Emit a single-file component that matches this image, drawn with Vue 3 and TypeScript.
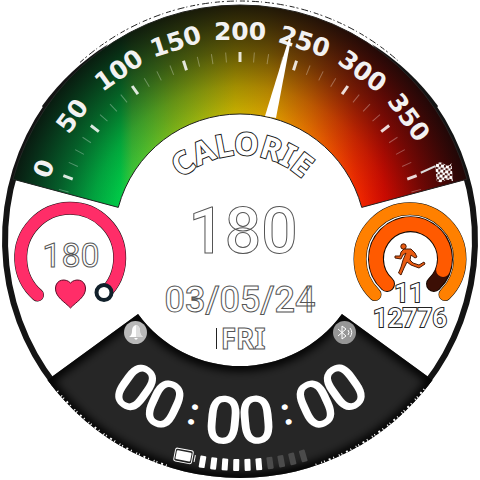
<script setup lang="ts">
interface Dial { value: string; angle: number }
interface Tick { angle: number; major: boolean }

const dialLabels: Dial[] = [
  { value: '0', angle: -70 },
  { value: '50', angle: -53.5 },
  { value: '100', angle: -35.5 },
  { value: '150', angle: -18 },
  { value: '200', angle: 0 },
  { value: '250', angle: 18 },
  { value: '300', angle: 36 },
  { value: '350', angle: 54 }
]

const ticks: Tick[] = Array.from({ length: 35 }, (_, i) => ({
  angle: -70 + (i - 1) * 4.375,
  major: (i - 1) % 4 === 0
}))

const batteryBars = Array.from({ length: 10 }, (_, i) => ({
  angle: 9.6 - i * 2.88,
  on: i < 6
}))

const heartRate = 180
const calories = 180
const steps = 12776
const floors = 11
const date = '03/05/24'
const weekday = 'FRI'
const clockPairs = [
  { text: '00', offset: '25%' },
  { text: '00', offset: '50%' },
  { text: '00', offset: '75%' }
]
const colonOffsets = ['37.5%', '62.5%']

function point(r: number, deg: number): string {
  const a = (deg * Math.PI) / 180
  return `${(240 + r * Math.sin(a)).toFixed(2)} ${(240 - r * Math.cos(a)).toFixed(2)}`
}

function sector(inner: number, outer: number, from: number, to: number): string {
  const large = to - from > 180 ? 1 : 0
  return `M${point(outer, from)}A${outer} ${outer} 0 ${large} 1 ${point(outer, to)}L${point(inner, to)}A${inner} ${inner} 0 ${large} 0 ${point(inner, from)}Z`
}

function arc(r: number, from: number, to: number): string {
  return `M${point(r, from)}A${r} ${r} 0 0 1 ${point(r, to)}`
}

// Baselines running left to right under the centre, 60 degrees to each side
function baseline(r: number): string {
  return `M${point(r, 240)}A${r} ${r} 0 0 0 ${point(r, 120)}`
}

const gaugePath = sector(126, 235, -75, 75)
const clockPanel = sector(126, 238, 126, 234)

// Bezel ends that narrow to a point against the gauge
const taperLeft = `M${point(239, -56)}A239 239 0 0 1 ${point(236, -34)}L${point(233, -56)}Z`
const taperRight = `M${point(239, 56)}A239 239 0 0 0 ${point(236, 34)}L${point(233, 56)}Z`
</script>

<template>
  <main class="face">
    <svg class="watch" viewBox="0 0 480 480" role="img" aria-label="Watch face">
      <defs>
        <linearGradient id="hue" gradientUnits="userSpaceOnUse" x1="0" y1="0" x2="480" y2="0">
          <stop offset="0" stop-color="#00b058" />
          <stop offset=".25" stop-color="#00cc48" />
          <stop offset=".275" stop-color="#3cc437" />
          <stop offset=".36" stop-color="#7ab41a" />
          <stop offset=".49" stop-color="#c8b000" />
          <stop offset=".56" stop-color="#d8a000" />
          <stop offset=".65" stop-color="#e66c00" />
          <stop offset=".74" stop-color="#f02c00" />
          <stop offset=".8" stop-color="#f40c00" />
          <stop offset="1" stop-color="#d00000" />
        </linearGradient>
        <radialGradient id="shade" gradientUnits="userSpaceOnUse" cx="240" cy="240" r="236">
          <stop offset=".53" stop-color="#0a0808" stop-opacity="0" />
          <stop offset=".65" stop-color="#0a0808" stop-opacity=".2" />
          <stop offset=".8" stop-color="#0a0808" stop-opacity=".54" />
          <stop offset=".92" stop-color="#0a0808" stop-opacity=".76" />
          <stop offset="1" stop-color="#0a0808" stop-opacity=".9" />
        </radialGradient>
        <pattern id="checker" width="5" height="5" patternUnits="userSpaceOnUse">
          <rect width="5" height="5" fill="#4a1512" />
          <rect width="3" height="3" fill="#fff" />
          <rect x="2.5" y="2.5" width="2.5" height="2.5" fill="#fff" />
        </pattern>
        <filter id="soft"><feGaussianBlur stdDeviation="4" /></filter>
        <clipPath id="panelClip"><path :d="clockPanel" /></clipPath>
        <path id="titleArc" d="M154 243A88 88 0 0 1 330 243" />
        <path id="clockArc" :d="baseline(204)" />
        <path id="colonArc" :d="baseline(191)" />
      </defs>

      <!-- bezel -->
      <path class="bezel" :d="arc(235, 232, 305)" />
      <path class="bezel" :d="arc(235, 55, 128)" />
      <path :d="taperLeft" fill="#141414" />
      <path :d="taperRight" fill="#141414" />
      <path class="speckle" :d="arc(239, 318, 360)" />
      <path class="speckle" :d="arc(239, 0, 42)" />

      <!-- calorie gauge -->
      <path :d="gaugePath" fill="url(#hue)" />
      <path :d="gaugePath" fill="url(#shade)" class="gauge-edge" />
      <g v-for="t in ticks" :key="t.angle" :transform="`rotate(${t.angle} 240 240)`">
        <line x1="240" x2="240" y1="52" y2="62" :class="t.major ? 'tick major' : 'tick'" />
      </g>
      <text
        v-for="l in dialLabels"
        :key="l.value"
        class="dial"
        x="240"
        y="40"
        :transform="`rotate(${l.angle} 240 240)`"
      >{{ l.value }}</text>
      <g transform="rotate(8 444 173)">
        <path d="M421 176L435 167" stroke="#ddd" stroke-width="2" />
        <path d="M434 166Q438 161 443 164T450 162L454 180Q448 178 445 181T438 182Z" fill="url(#checker)" />
      </g>
      <path d="M289 38L291 39L276 118L265 116Z" fill="#fff" />

      <text class="title"><textPath href="#titleArc" startOffset="50%">CALORIE</textPath></text>
      <text class="calories outlined" x="243" y="253">{{ calories }}</text>
      <text class="date outlined" x="240" y="312">{{ date }}</text>
      <text class="weekday outlined" x="243" y="349">{{ weekday }}</text>
      <path d="M216.500 328V349" stroke="#222" />

      <!-- heart rate -->
      <path class="halo" d="M37.500 295A49.500 49.500 0 1 1 104 294" />
      <path class="ring pulse" d="M37.500 295A49.500 49.500 0 1 1 104 294" />
      <circle cx="104" cy="292.500" r="7.500" fill="#fff" stroke="#12212b" stroke-width="4" />
      <text class="rate outlined" x="71" y="267">{{ heartRate }}</text>
      <path
        d="M70.500 308C65 302 55 297 55.500 288C56 279 66 278 70.500 283C75 278 85 279 85.500 288C86 297 76 302 70.500 308Z"
        fill="#ff2d68"
        stroke="#5a0c26"
      />

      <!-- activity -->
      <path class="halo" d="M375 294.500A50 50 0 1 1 445 294.500" />
      <path class="ring steps" d="M375 294.500A50 50 0 1 1 445 294.500" />
      <path d="M387 284A34.500 34.500 0 1 1 434 284" fill="none" stroke="#150800" stroke-width="16" stroke-linecap="round" />
      <path d="M442 272Q439 279 434 284" class="inner rest" />
      <path d="M387 284A34.500 34.500 0 1 1 443 270" class="inner" />
      <g class="runner">
        <circle cx="403.500" cy="246.500" r="2.700" />
        <path d="M404 249L411 249L415 253L417 257L415 258L411 255L410 260L413 263L419 265L424 262L425 264L419 268L411 265L407 262L404 268L401 275L398.500 273L401 267L403 260L406 253L403 255L401 259L395 258L395 256L400 256L401 252Z" />
      </g>
      <text class="small" x="409" y="302">{{ floors }}</text>
      <text class="small" x="410" y="327">{{ steps }}</text>

      <!-- clock panel -->
      <path :d="clockPanel" fill="#262626" />
      <path :d="clockPanel" class="panel-shadow" clip-path="url(#panelClip)" filter="url(#soft)" />
      <path class="grain" :d="arc(237, 129, 162)" />
      <path class="grain" :d="arc(237, 198, 231)" />
      <text v-for="p in clockPairs" :key="p.offset" class="clock">
        <textPath href="#clockArc" :startOffset="p.offset">{{ p.text }}</textPath>
      </text>
      <text v-for="o in colonOffsets" :key="o" class="colon">
        <textPath href="#colonArc" :startOffset="o">:</textPath>
      </text>

      <g v-for="b in batteryBars" :key="b.angle" :transform="`rotate(${b.angle} 240 240)`">
        <rect x="237" y="459" width="6" height="12" rx="1" :fill="b.on ? '#fff' : '#4b4b4b'" />
      </g>
      <g transform="rotate(11 184 456)">
        <rect x="174.500" y="449.500" width="18" height="13" rx="2" fill="none" stroke="#fff" />
        <rect x="176" y="451.500" width="15" height="9" rx="1" fill="#fff" />
        <path d="M195 453V460" stroke="#fff" />
      </g>

      <!-- status badges -->
      <circle cx="135.500" cy="332.500" r="11.500" fill="#b9b9b9" />
      <path d="M129 337Q132 335 132 331Q132 326 136 325Q140 326 140 331Q140 335 143 337ZM134 338H138L136 340Z" fill="#fff" />
      <path d="M136 325Q140 326 140 331Q140 335 143 337H136Z" fill="#dedede" />
      <circle cx="344.500" cy="332.500" r="11.500" fill="#969696" />
      <path class="bluetooth" d="M338 329L346 336L342 339V326L346 329L338 336M348 330Q350 332.500 348 335M350 328Q353.500 332.500 350 337" />
    </svg>
  </main>
</template>

<style>
body {
  background: #fff;
}
</style>

<style scoped>
.face {
  display: flex;
  justify-content: center;
}
.watch {
  display: block;
  width: 100%;
  max-height: 100vh;
}
text {
  text-anchor: middle;
  fill: #fff;
  font-family: Roboto, "Liberation Sans", sans-serif;
}
.outlined {
  stroke: #555;
  stroke-width: 1;
}
.dial {
  font: bold 25px "DejaVu Sans", sans-serif;
  fill: #f2f2f2;
}
.title {
  font: bold 31px "Noto Sans", sans-serif;
  stroke: #222;
  stroke-width: 2;
  paint-order: stroke;
}
.calories {
  font-size: 64px;
  font-weight: 500;
}
.date {
  font-size: 36px;
  font-weight: 500;
}
.weekday {
  font: bold 28px "Noto Sans", sans-serif;
}
.rate {
  font-size: 34px;
}
.small {
  font-size: 26px;
  font-weight: 500;
  stroke: #222;
  stroke-width: 2;
  paint-order: stroke;
}
.clock {
  font-size: 66px;
  font-weight: 500;
}
.colon {
  font-size: 38px;
  font-weight: 700;
}
.bezel {
  fill: none;
  stroke: #141414;
  stroke-width: 6;
}
.speckle {
  fill: none;
  stroke: #222;
  stroke-width: 1;
  stroke-dasharray: 5 2 2 3 7 2 1 3;
}
.grain {
  fill: none;
  stroke: #fff;
  stroke-width: 2;
  stroke-dasharray: 1 3 2 4 1 2 1 5;
}
.gauge-edge {
  stroke: #222;
  stroke-width: 1;
}
.tick {
  stroke: #fff;
  stroke-width: 1;
  opacity: 0.3;
}
.major {
  stroke-width: 3;
  opacity: 0.85;
}
.ring {
  fill: none;
  stroke-width: 12;
  stroke-linecap: round;
}
.halo {
  fill: none;
  stroke: #111;
  stroke-width: 13;
  stroke-linecap: round;
}
.pulse {
  stroke: #ff2d68;
}
.steps {
  stroke: #ff8000;
}
.inner {
  fill: none;
  stroke: #ff5a00;
  stroke-width: 14;
  stroke-linecap: round;
}
.rest {
  stroke: #3c0f05;
}
.runner {
  fill: #e95a10;
  stroke: #4a1a05;
  stroke-width: 1;
}
.panel-shadow {
  fill: none;
  stroke: #000;
  stroke-width: 10;
}
.bluetooth {
  fill: none;
  stroke: #fff;
  stroke-width: 1;
}
</style>
